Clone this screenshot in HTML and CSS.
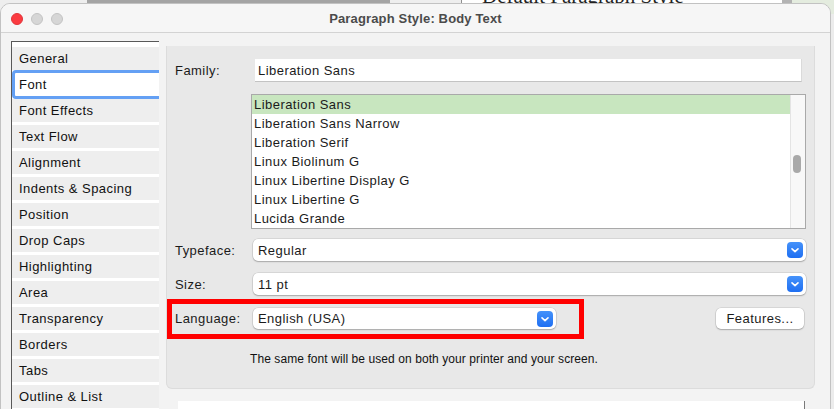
FILE: index.html
```html
<!DOCTYPE html>
<html>
<head>
<meta charset="utf-8">
<title>Paragraph Style: Body Text</title>
<link rel="stylesheet" href="styles.css">
</head>
<body>
<div class="backdrop">
  <div class="bd-a"></div>
  <div class="bd-b"></div>
  <div class="bd-c"></div>
  <div class="bd-doc"><span class="bd-text">Default Paragraph Style</span></div>
  <div class="bd-scroll"></div>
  <div class="bd-d"></div>
</div>
<div class="window">
  <div class="titlebar">
    <div class="lights">
      <span class="light red"></span>
      <span class="light"></span>
      <span class="light"></span>
    </div>
    <div class="title">Paragraph Style: Body Text</div>
  </div>
  <div class="content">
    <div class="sidebar">
      <div class="nav-item">General</div>
      <div class="nav-item active">Font</div>
      <div class="nav-item">Font Effects</div>
      <div class="nav-item">Text Flow</div>
      <div class="nav-item">Alignment</div>
      <div class="nav-item">Indents &amp; Spacing</div>
      <div class="nav-item">Position</div>
      <div class="nav-item">Drop Caps</div>
      <div class="nav-item">Highlighting</div>
      <div class="nav-item">Area</div>
      <div class="nav-item">Transparency</div>
      <div class="nav-item">Borders</div>
      <div class="nav-item">Tabs</div>
      <div class="nav-item">Outline &amp; List</div>
    </div>
    <div class="main">
      <div class="panel">
        <div class="row row-family">
          <span class="label">Family:</span>
          <div class="input">Liberation Sans</div>
        </div>
        <div class="fontlist">
          <div class="options">
            <div class="opt sel">Liberation Sans</div>
            <div class="opt">Liberation Sans Narrow</div>
            <div class="opt">Liberation Serif</div>
            <div class="opt">Linux Biolinum G</div>
            <div class="opt">Linux Libertine Display G</div>
            <div class="opt">Linux Libertine G</div>
            <div class="opt">Lucida Grande</div>
          </div>
          <div class="scroll"><div class="thumb"></div></div>
        </div>
        <div class="row row-typeface">
          <span class="label">Typeface:</span>
          <div class="select wide">
            <span>Regular</span>
            <span class="chev"><svg viewBox="0 0 16 16" width="16" height="16"><path d="M5 6.8 L8 9.6 L11 6.8" fill="none" stroke="#fff" stroke-width="1.6" stroke-linecap="round" stroke-linejoin="round"/></svg></span>
          </div>
        </div>
        <div class="row row-size">
          <span class="label">Size:</span>
          <div class="select wide">
            <span>11 pt</span>
            <span class="chev"><svg viewBox="0 0 16 16" width="16" height="16"><path d="M5 6.8 L8 9.6 L11 6.8" fill="none" stroke="#fff" stroke-width="1.6" stroke-linecap="round" stroke-linejoin="round"/></svg></span>
          </div>
        </div>
        <div class="row row-lang">
          <span class="label">Language:</span>
          <div class="select narrow">
            <span>English (USA)</span>
            <span class="chev"><svg viewBox="0 0 16 16" width="16" height="16"><path d="M5 6.8 L8 9.6 L11 6.8" fill="none" stroke="#fff" stroke-width="1.6" stroke-linecap="round" stroke-linejoin="round"/></svg></span>
          </div>
          <button class="btn">Features...</button>
        </div>
        <div class="note">The same font will be used on both your printer and your screen.</div>
        <div class="highlight-box"></div>
      </div>
      <div class="preview"></div>
    </div>
  </div>
</div>
</body>
</html>
```
FILE: styles.css
```css
* { box-sizing: border-box; }
html, body { margin: 0; padding: 0; }
body {
  width: 834px;
  height: 409px;
  overflow: hidden;
  position: relative;
  background: #ececec;
  font-family: "Liberation Sans", Arial, sans-serif;
  font-size: 13px;
  color: #1b1b1b;
}

/* window behind */
.backdrop {
  position: absolute;
  top: 0; left: 0; right: 0;
  height: 14px;
  display: flex;
}
.bd-a { width: 87px; background: #eeeeee; }
.bd-b { width: 303px; background: #a4a4a4; }
.bd-c { width: 72px; background: #eeeeee; border-right: 1px solid #8f8f8f; }
.bd-doc { width: 320px; background: #ffffff; overflow: hidden; padding-left: 20px; }
.bd-text {
  display: block;
  font-family: "Liberation Serif", serif;
  font-size: 21px;
  line-height: 21px;
  margin-top: -14px;
  color: #222;
  white-space: nowrap;
}
.bd-scroll { width: 10px; background: #b3b3b3; }
.bd-d { flex: 1; background: #e4ecdf; }

/* dialog window */
.window {
  position: absolute;
  left: 0;
  top: 3px;
  width: 831px;
  height: 430px;
  background: #f3f3f3;
  border: 1px solid #c2c2c2;
  border-radius: 10px 10px 0 0;
  overflow: hidden;
}
.titlebar {
  height: 29px;
  background: #f6f6f6;
  border-bottom: 1px solid #d3d3d3;
  display: flex;
  align-items: center;
  position: relative;
}
.lights {
  display: flex;
  gap: 8px;
  padding-left: 10px;
  margin-top: 1px;
}
.light {
  width: 12px;
  height: 12px;
  border-radius: 50%;
  background: #d6d6d6;
  border: 1px solid #c3c3c3;
}
.light.red { background: #fb3b41; border-color: #e0353a; }
.title {
  position: absolute;
  left: 0; right: 0;
  text-align: center;
  font-weight: bold;
  font-size: 13px;
  letter-spacing: 0.15px;
  color: #4b4b4b;
}

.content {
  display: flex;
  padding: 8px 0 0 10px;
}
.sidebar {
  flex: none;
  width: 148px;
  height: 400px;
  background: #ffffff;
  border-left: 1px solid #585858;
  border-top: 1px solid #585858;
  padding-top: 5px;
  overflow: hidden;
}
.nav-item {
  height: 23px;
  line-height: 23px;
  padding-left: 7px;
  margin-bottom: 3px;
  background: #eeeeee;
  white-space: nowrap;
  letter-spacing: 0.45px;
  color: #111;
}
.nav-item.active {
  height: 29px;
  line-height: 23px;
  margin-top: -3px;
  margin-bottom: 0;
  margin-right: -4px;
  padding-left: 4px;
  background: #ffffff;
  border: 3px solid #64a0f4;
  border-radius: 4px;
}

.main {
  margin-left: 7px;
  margin-top: 5px;
  display: flex;
  flex-direction: column;
}
.panel {
  position: relative;
  width: 649px;
  height: 343px;
  background: #e8e8e8;
  border: 1px solid #dcdcdc;
  border-top: none;
  border-radius: 0 0 6px 6px;
  padding: 12px 0 0 8px;
  letter-spacing: 0.45px;
}
.row {
  display: flex;
  align-items: center;
}
.row-family { margin-top: 1px; }
.label {
  width: 78px;
  flex: none;
  color: #1b1b1b;
}
.input {
  margin-left: 2px;
  width: 547px;
  height: 23px;
  line-height: 23px;
  background: #ffffff;
  border-bottom: 1px solid #c3c3c3;
  border-right: 1px solid #dadada;
  padding-left: 3px;
}
.fontlist {
  display: flex;
  margin: 12px 0 0 76px;
  width: 555px;
  height: 135px;
  background: #ffffff;
  border: 1px solid #a9a9a9;
}
.options { flex: 1; }
.opt {
  height: 19px;
  line-height: 19px;
  padding-left: 2px;
  white-space: nowrap;
}
.opt.sel { background: #c8e6bf; }
.scroll {
  width: 15px;
  background: #f8f8f8;
  border-left: 1px solid #e4e4e4;
  padding: 60px 0 0 2px;
}
.thumb {
  width: 8px;
  height: 18px;
  border-radius: 4px;
  background: #a9a9a9;
}
.row-typeface { margin-top: 10px; }
.row-size { margin-top: 12px; }
.row-lang { margin-top: 13px; }
.select {
  display: flex;
  align-items: center;
  height: 22px;
  background: #ffffff;
  border-radius: 5px;
  box-shadow: 0 0 0 0.5px rgba(0,0,0,0.14), 0 1px 1.5px rgba(0,0,0,0.22);
  padding-left: 5px;
}
.select.wide { width: 553px; }
.select.narrow { width: 303px; height: 21px; }
.chev {
  margin-left: auto;
  margin-right: 3px;
  width: 16px;
  height: 16px;
  border-radius: 4px;
  background: linear-gradient(#4592fa, #1f6ff2);
  display: flex;
}
.btn {
  margin-left: 160px;
  width: 88px;
  height: 21px;
  background: #ffffff;
  border: none;
  border-radius: 5px;
  box-shadow: 0 0 0 0.5px rgba(0,0,0,0.14), 0 1px 1.5px rgba(0,0,0,0.22);
  font-family: "Liberation Sans", Arial, sans-serif;
  font-size: 13px;
  letter-spacing: 0.45px;
  color: #1b1b1b;
  padding: 0;
}
.note {
  margin: 23px 0 0 75px;
  font-size: 12px;
  line-height: 15px;
  letter-spacing: 0.08px;
  color: #111;
}
.highlight-box {
  position: absolute;
  left: 0;
  top: 253px;
  width: 417px;
  height: 40px;
  border: 5px solid #ff0000;
}
.preview {
  margin: 12px 0 0 12px;
  width: 627px;
  height: 40px;
  background: #ffffff;
  border-right: 1px solid #7a7a7a;
}
```
